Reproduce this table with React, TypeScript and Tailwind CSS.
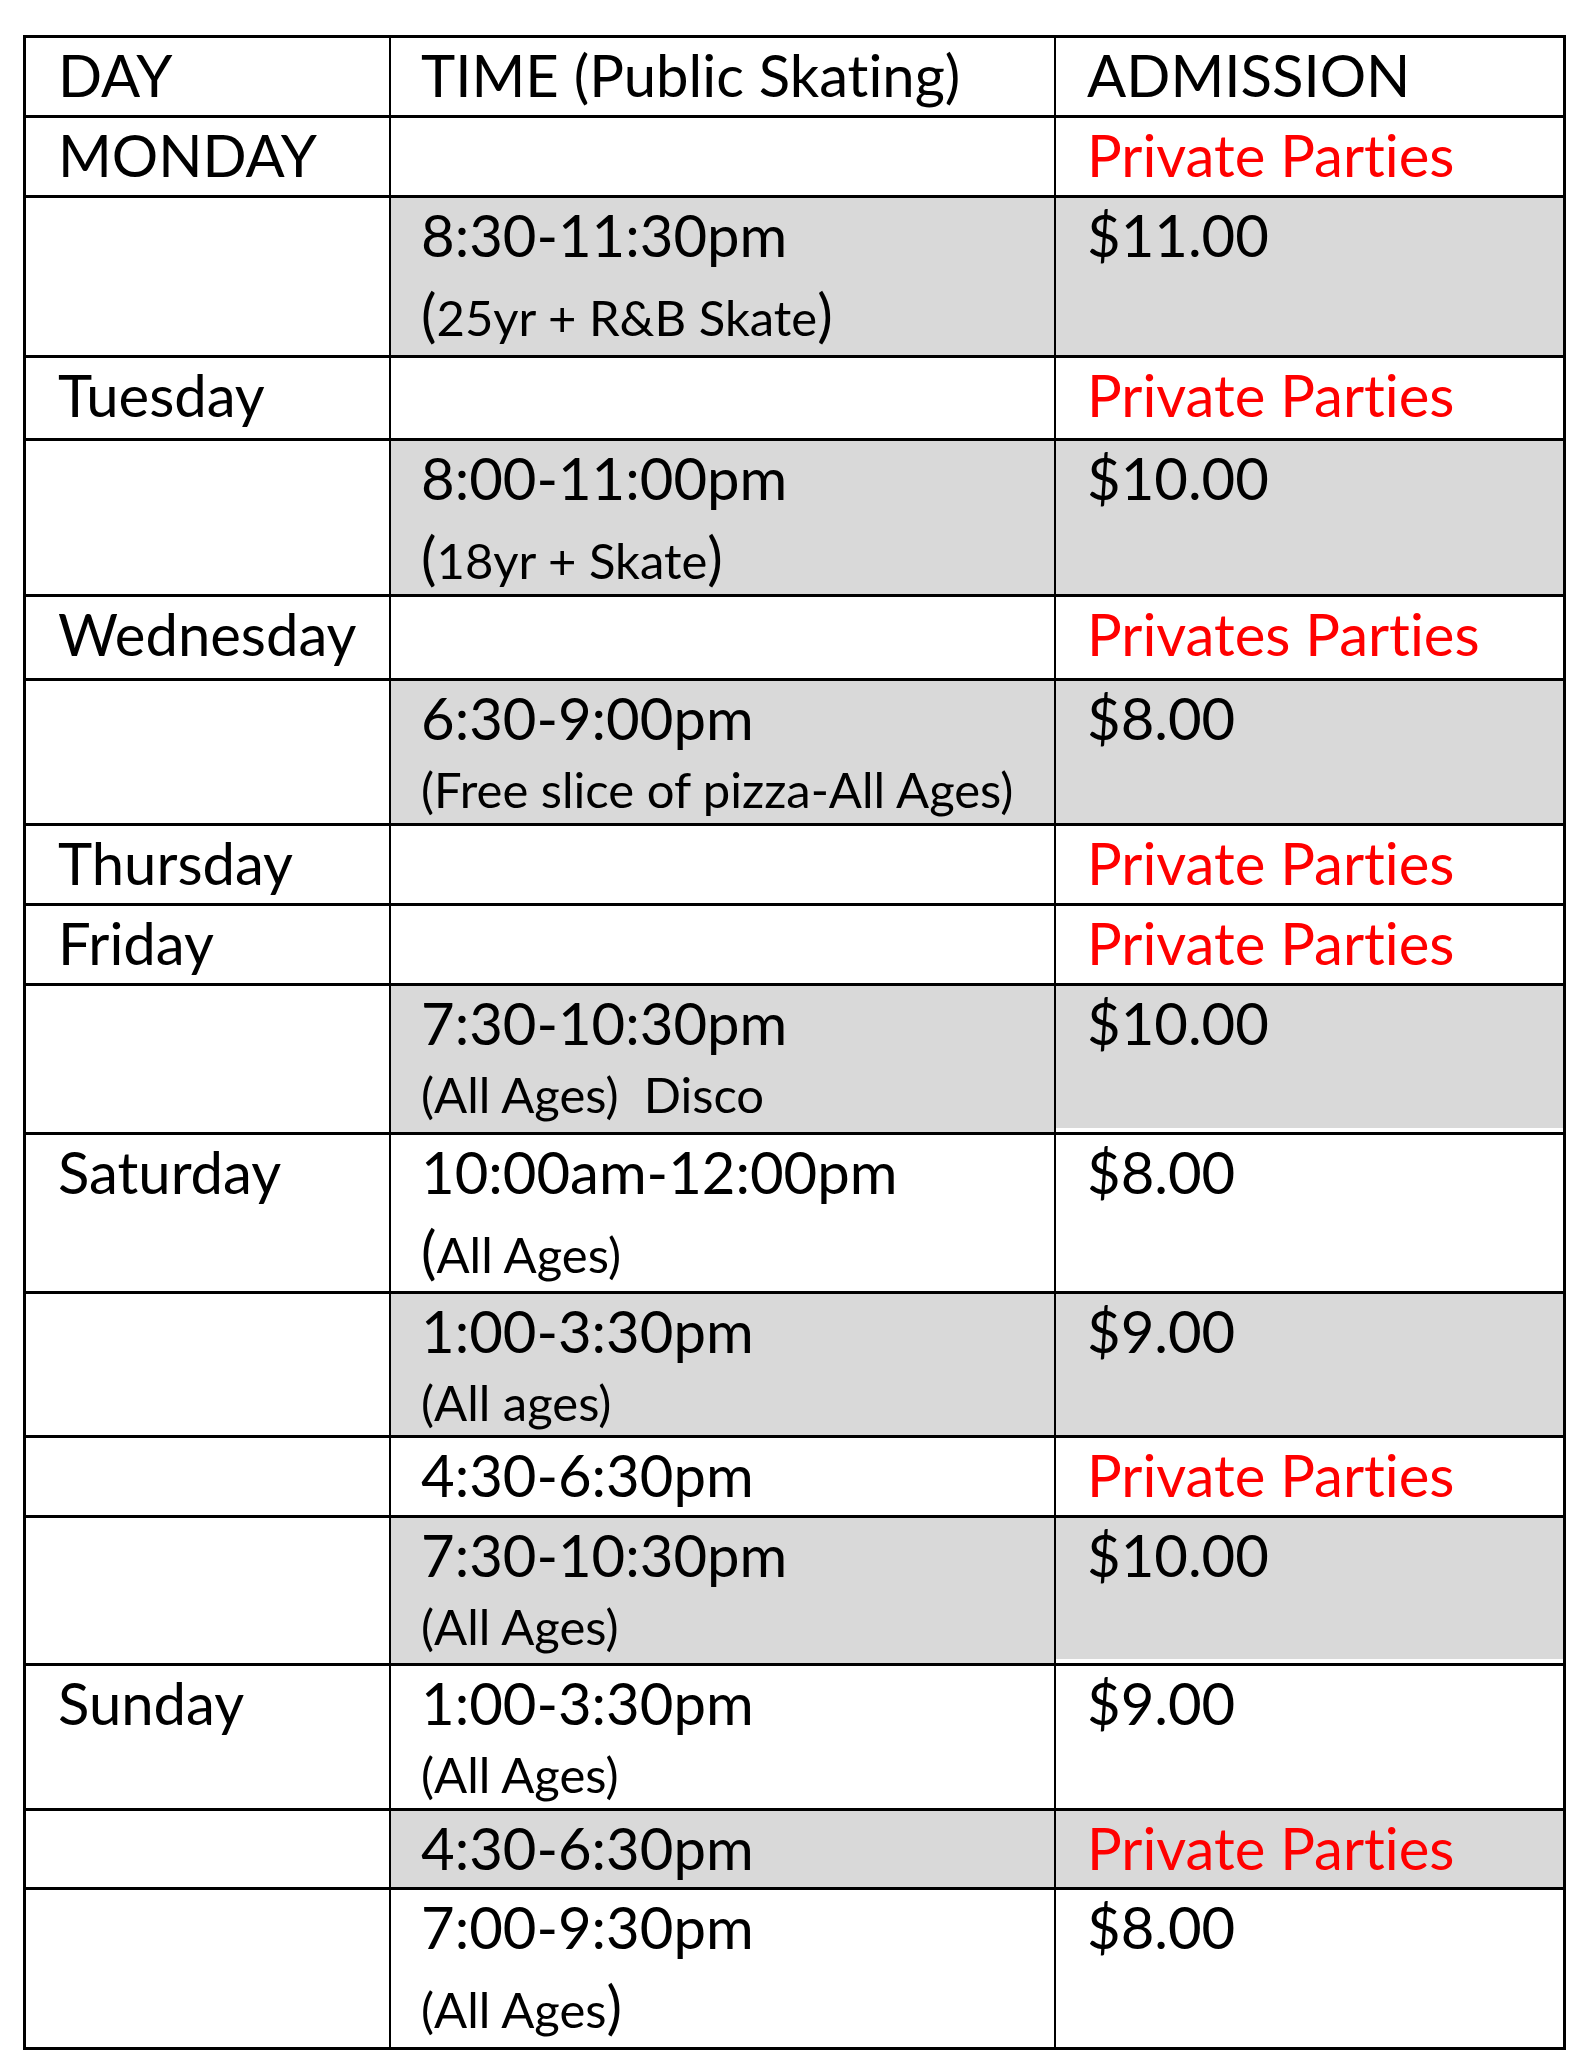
import React from 'react';

type Row = {
  h: string;
  day?: string;
  time?: string;
  sub?: React.ReactNode;
  tall?: boolean;
  adm?: string;
  red?: boolean;
  shade?: boolean;
  strip?: boolean;
};

// the bigger parentheses Word left behind in a few of the sub lines
const Big: React.FC<{ children: React.ReactNode }> = ({ children }) => (
  <span className="text-[58px] leading-none">{children}</span>
);

const ROWS: Row[] = [
  { h: 'h-[80px]', day: 'DAY', time: 'TIME (Public Skating)', adm: 'ADMISSION' },
  { h: 'h-[80px]', day: 'MONDAY', adm: 'Private Parties', red: true },
  {
    h: 'h-[160px]',
    time: '8:30-11:30pm',
    sub: (
      <>
        <Big>(</Big>25yr + R&amp;B Skate<Big>)</Big>
      </>
    ),
    tall: true,
    adm: '$11.00',
    shade: true,
  },
  { h: 'h-[83px]', day: 'Tuesday', adm: 'Private Parties', red: true },
  {
    h: 'h-[156px]',
    time: '8:00-11:00pm',
    sub: (
      <>
        <Big>(</Big>18yr + Skate<Big>)</Big>
      </>
    ),
    tall: true,
    adm: '$10.00',
    shade: true,
  },
  { h: 'h-[84px]', day: 'Wednesday', adm: 'Privates Parties', red: true },
  {
    h: 'h-[145px]',
    time: '6:30-9:00pm',
    sub: '(Free slice of pizza-All Ages)',
    adm: '$8.00',
    shade: true,
  },
  { h: 'h-[80px]', day: 'Thursday', adm: 'Private Parties', red: true },
  { h: 'h-[80px]', day: 'Friday', adm: 'Private Parties', red: true },
  {
    h: 'h-[149px]',
    time: '7:30-10:30pm',
    sub: <span className="whitespace-pre">(All Ages)  Disco</span>,
    adm: '$10.00',
    shade: true,
    strip: true,
  },
  {
    h: 'h-[159px]',
    day: 'Saturday',
    time: '10:00am-12:00pm',
    sub: (
      <>
        <Big>(</Big>All Ages)
      </>
    ),
    tall: true,
    adm: '$8.00',
  },
  { h: 'h-[144px]', time: '1:00-3:30pm', sub: '(All ages)', adm: '$9.00', shade: true },
  { h: 'h-[80px]', time: '4:30-6:30pm', adm: 'Private Parties', red: true },
  {
    h: 'h-[148px]',
    time: '7:30-10:30pm',
    sub: '(All Ages)',
    adm: '$10.00',
    shade: true,
    strip: true,
  },
  { h: 'h-[145px]', day: 'Sunday', time: '1:00-3:30pm', sub: '(All Ages)', adm: '$9.00' },
  { h: 'h-[79px]', time: '4:30-6:30pm', adm: 'Private Parties', red: true, shade: true },
  {
    h: 'h-[160px]',
    time: '7:00-9:30pm',
    sub: (
      <>
        (All Ages<Big>)</Big>
      </>
    ),
    tall: true,
    adm: '$8.00',
  },
];

export default function App() {
  return (
    <div className="min-h-screen bg-white pl-[23px] pt-[35px] font-['Lato',sans-serif] text-[58px] text-black [font-variant-ligatures:none]">
      <div className="w-[1543px] border-x-[3px] border-t-[3px] border-black">
        {ROWS.map((r, i) => (
          <div
            key={i}
            className={`grid grid-cols-[363px_665px_509px] border-b-[3px] border-black ${r.h}`}
          >
            <div className="pl-[32px] pt-[3px] leading-[68px]">{r.day}</div>
            <div
              className={`border-l-2 border-black pl-[30px] pt-[3px] ${r.shade ? 'bg-[#d9d9d9]' : ''}`}
            >
              {r.time && <div className="leading-[68px]">{r.time}</div>}
              {r.sub && (
                <div
                  className={`text-[49px] leading-[58px] whitespace-nowrap ${
                    r.tall ? 'mt-[16px]' : 'mt-[8px]'
                  }`}
                >
                  {r.sub}
                </div>
              )}
            </div>
            <div
              className={`border-l-2 border-black pl-[31px] pt-[3px] leading-[68px] ${
                r.shade ? 'bg-[#d9d9d9]' : ''
              } ${r.strip ? 'shadow-[inset_0_-4px_0_#ffffff]' : ''} ${
                r.red ? 'text-[#ff0000]' : ''
              }`}
            >
              {r.adm}
            </div>
          </div>
        ))}
      </div>
    </div>
  );
}
